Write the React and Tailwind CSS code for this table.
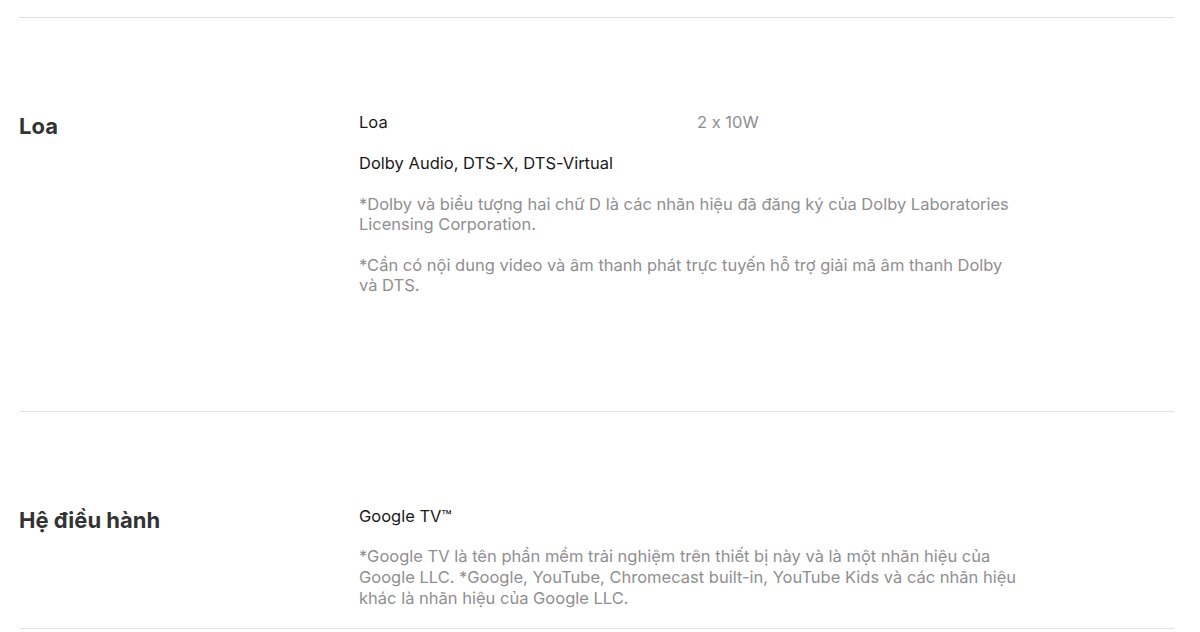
import React from "react";

function Section({ title, children, className }) {
  return (
    <div className={"flex border-t border-[#e0e0e0] " + className}>
      <div className="w-[340px] shrink-0 text-[22px] leading-[1.3] font-bold text-[#333333]">{title}</div>
      <div className="w-[660px] text-[16.5px]">{children}</div>
    </div>
  );
}

export default function App() {
  return (
    <div
      className="w-[1200px] h-[632px] bg-white pt-[17px] pl-[19px] pr-[26px] [font-feature-settings:'calt'_0]"
      style={{ fontFamily: "Inter, 'Noto Sans', sans-serif" }}
    >
      <Section title="Loa" className="pt-[94px] pb-[116px] leading-[20px]">
        <div className="flex text-[#1a1a1a] leading-[20px]">
          <div className="w-[338px]">Loa</div>
          <div className="text-[#8f8f8f]">2 x 10W</div>
        </div>
        <div className="mt-[21px] text-[#1a1a1a] leading-[20px]">Dolby Audio, DTS-X, DTS-Virtual</div>
        <p className="mt-[21px] text-[#8f8f8f] leading-[20px]">
          *Dolby và biểu tượng hai chữ D là các nhãn hiệu đã đăng ký của Dolby Laboratories Licensing Corporation.
        </p>
        <p className="mt-[21px] text-[#8f8f8f] leading-[20px]">
          *Cần có nội dung video và âm thanh phát trực tuyến hỗ trợ giải mã âm thanh Dolby và DTS.
        </p>
      </Section>
      <Section title="Hệ điều hành" className="pt-[94px] pb-[19px] border-b">
        <div className="text-[#1a1a1a] leading-[21px] h-[21px]">Google TV™</div>
        <p className="mt-[19px] text-[#8f8f8f] leading-[21px]">
          *Google TV là tên phần mềm trải nghiệm trên thiết bị này và là một nhãn hiệu của Google LLC. *Google, YouTube, Chromecast built-in, YouTube Kids và các nhãn hiệu khác là nhãn hiệu của Google LLC.
        </p>
      </Section>
    </div>
  );
}
